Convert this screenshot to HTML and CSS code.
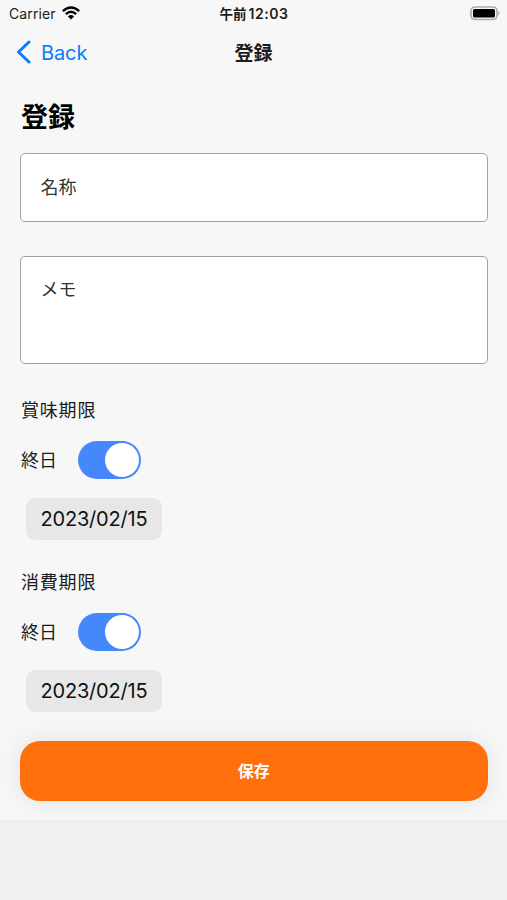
FILE: index.html
```html
<!DOCTYPE html>
<html lang="ja">
<head>
<meta charset="utf-8">
<title>登録</title>
<link rel="stylesheet" href="styles.css">
</head>
<body>
<div class="screen">
  <div class="status">
    <div class="carrier"><span>Carrier</span>
      <svg width="18" height="14" viewBox="0 0 18 14" fill="none" stroke="#000" stroke-width="2.3"><path d="M.8 5.2Q9-2.1 17.2 5.2M3.8 8.2Q9 3.3 14.2 8.2"/><path d="M5.9 10.4Q9 7.6 12.1 10.4L9 13.5Z" fill="#000" stroke="none"/></svg>
    </div>
    <div class="time">午前<span>12:03</span></div>
    <svg class="battery" width="31" height="15" viewBox="0 0 31 15"><rect x="2" y="1" width="26" height="12.5" rx="4" fill="#f7f7f7" stroke="#aaa" stroke-width="1.6"/><rect x="4" y="3" width="22" height="8.5" rx="1.5" fill="#000"/><path d="M29.2 5Q31.7 7.2 29.2 9.5Z" fill="#aaa"/></svg>
  </div>
  <nav class="nav">
    <a class="back"><svg width="16" height="24" viewBox="0 0 16 24" fill="none" stroke="#087cff" stroke-width="3" stroke-linecap="round" stroke-linejoin="round"><path d="M13 2L2.5 12L13 22"/></svg><span>Back</span></a>
    <div class="title">登録</div>
    <div></div>
  </nav>
  <main class="form">
    <h1>登録</h1>
    <div class="field">名称</div>
    <div class="field memo">メモ</div>
    <section class="limit">
      <h2>賞味期限</h2>
      <div class="row"><span>終日</span><div class="switch"><i></i></div></div>
      <div class="date">2023/02/15</div>
    </section>
    <section class="limit">
      <h2>消費期限</h2>
      <div class="row"><span>終日</span><div class="switch"><i></i></div></div>
      <div class="date">2023/02/15</div>
    </section>
    <button class="save">保存</button>
  </main>
</div>
</body>
</html>
```
FILE: styles.css
```css
* { box-sizing: border-box; }
body {
  margin: 0;
  height: 900px;
  overflow: hidden;
  background: #f0f0f0;
  font-family: Inter, "Noto Sans CJK JP", sans-serif;
  color: #1c1c1c;
}
.screen { height: 820px; background: #f7f7f7; }
.status {
  display: grid;
  grid-template-columns: 1fr auto 1fr;
  align-items: center;
  height: 27px;
  padding: 0 7px 0 9px;
  line-height: 20px;
}
.carrier { display: flex; align-items: center; gap: 6px; font-size: 14px; letter-spacing: .1px; }
.carrier svg { margin-top: -2px; }
.time { margin-right: 1px; font-size: 13.5px; font-weight: 700; }
.time span { font-size: 14px; font-weight: 600; letter-spacing: .55px; margin-left: 2px; }
.battery { justify-self: end; }
.nav {
  display: grid;
  grid-template-columns: 1fr auto 1fr;
  align-items: center;
  height: 50px;
  padding: 0 16px;
}
.back { display: flex; align-items: center; gap: 9px; color: #087cff; font-size: 20px; line-height: 24px; letter-spacing: -.1px; }
.back span { padding-top: 1px; }
.title { padding-top: 3px; font-size: 19px; line-height: 28px; font-weight: 700; }
.form { padding: 21px 19.5px 0 20px; }
h1 { margin: 0 0 15px; padding-left: 1px; font-size: 27px; line-height: 40px; font-weight: 700; color: #000; }
.field {
  height: 69px;
  padding: 20px 19.5px;
  border: 1px solid #a2a2a2;
  border-radius: 5px;
  background: #fff;
  font-size: 18px;
  line-height: 28px;
  color: #333;
}
.memo { height: 108px; margin-top: 34px; line-height: 26px; }
.limit { height: 172px; padding-top: 33px; font-size: 18px; }
h2 { margin: 0; font-size: 18px; line-height: 28px; font-weight: 400; letter-spacing: .8px; padding-left: 1px; }
.row { display: flex; align-items: center; gap: 21px; margin-top: 16px; height: 38px; padding-left: 1px; }
.row span { margin-top: -2px; }
.switch { display: flex; justify-content: flex-end; width: 63px; height: 38px; padding: 2px; border-radius: 19px; background: #4588fb; }
.switch i { width: 34px; height: 34px; border-radius: 50%; background: #fff; }
.date {
  width: 136px;
  height: 42px;
  margin: 19px 0 0 6px;
  border-radius: 9px;
  background: #e7e7e7;
  color: #111;
  font-size: 20px;
  line-height: 43px;
  letter-spacing: -.2px;
  text-align: center;
}
.save {
  display: block;
  width: 100%;
  height: 60px;
  margin-top: 33px;
  padding: 0;
  border: 0;
  border-radius: 20px;
  background: #ff6f0b;
  box-shadow: 0 0 26px rgba(0,0,0,.09);
  color: #fff;
  font: 700 16px/60px Inter, "Noto Sans CJK JP", sans-serif;
}
```
